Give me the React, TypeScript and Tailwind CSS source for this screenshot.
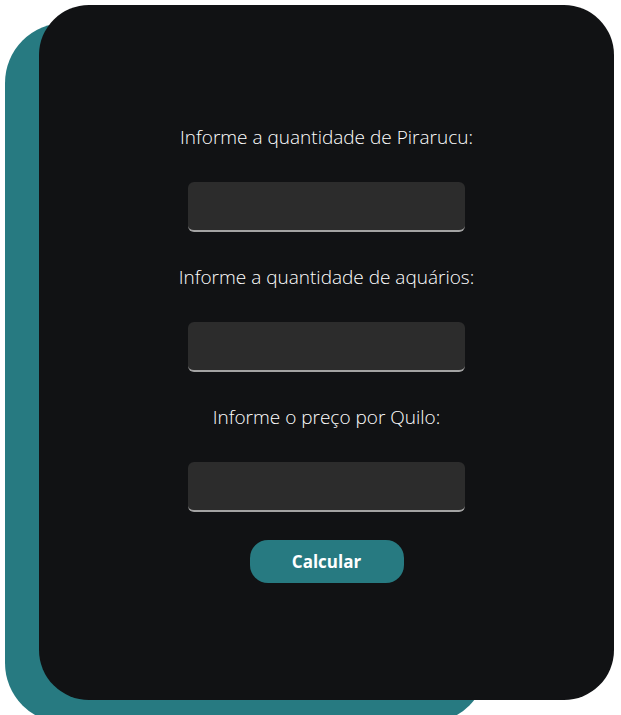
import { useState } from "react";

const fields = [
  { id: "pirarucu", label: "Informe a quantidade de Pirarucu:" },
  { id: "aquarios", label: "Informe a quantidade de aquários:" },
  { id: "preco", label: "Informe o preço por Quilo:" },
];

export default function App() {
  const [values, setValues] = useState<Record<string, string>>({});

  return (
    <div className="min-h-screen bg-white font-['Open_Sans',sans-serif]">
      <div className="relative w-[621px] h-[715px] overflow-hidden">
        {/* teal backdrop */}
        <div className="absolute left-[5px] top-[23px] w-[482px] h-[700px] rounded-[60px] bg-[#277a81]" />

        <div className="relative ml-[39px] mt-[5px] w-[575px] h-[695px] rounded-[50px] bg-[#111214] pt-[118px] flex flex-col items-center">
          {fields.map((f) => (
            <div key={f.id} className="flex flex-col items-center gap-[31px] mb-[31px]">
              <label
                htmlFor={f.id}
                className="text-white text-[19px] leading-[28px] font-light"
              >
                {f.label}
              </label>
              <input
                id={f.id}
                value={values[f.id] ?? ""}
                onChange={(e) => setValues({ ...values, [f.id]: e.target.value })}
                className="w-[277px] h-[50px] rounded-[6px] bg-[#2c2c2c] border-b-2 border-[#a3a3a3] outline-none px-3 text-white"
              />
            </div>
          ))}
          <button className="-mt-[3px] w-[154px] h-[43px] rounded-[18px] bg-[#277a81] text-white font-bold text-[17px]">
            Calcular
          </button>
        </div>
      </div>
    </div>
  );
}
